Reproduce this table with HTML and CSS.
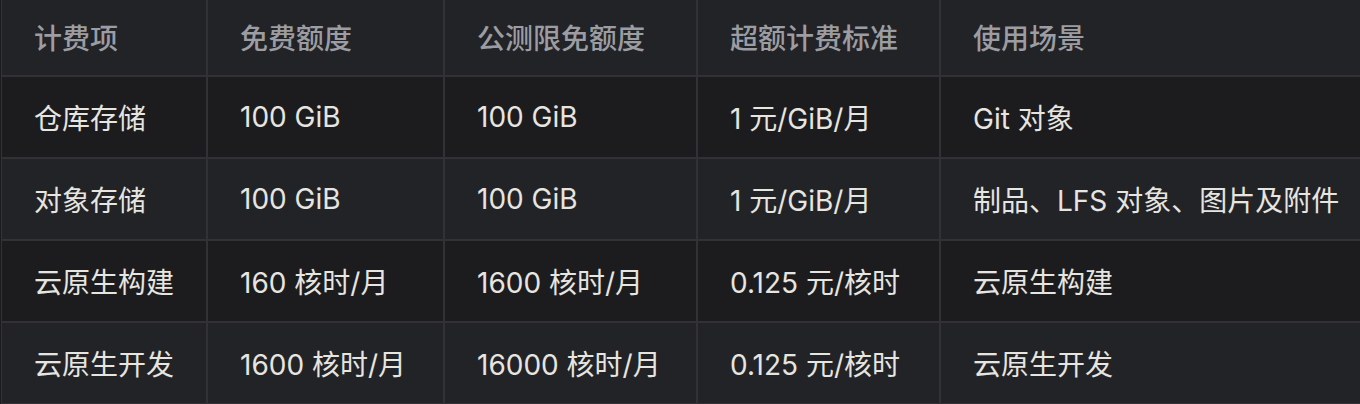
FILE: index.html
```html
<!DOCTYPE html>
<html lang="zh-CN">
<head>
<meta charset="utf-8">
<title>计费</title>
<link rel="stylesheet" href="styles.css">
</head>
<body>
<div class="wrap">
<table class="billing">
  <colgroup>
    <col class="c1"><col class="c2"><col class="c3"><col class="c4"><col class="c5">
  </colgroup>
  <thead>
    <tr><th>计费项</th><th>免费额度</th><th>公测限免额度</th><th>超额计费标准</th><th>使用场景</th></tr>
  </thead>
  <tbody>
    <tr class="odd"><td>仓库存储</td><td>100 GiB</td><td>100 GiB</td><td>1 元/GiB/月</td><td>Git 对象</td></tr>
    <tr class="even"><td>对象存储</td><td>100 GiB</td><td>100 GiB</td><td>1 元/GiB/月</td><td>制品、LFS 对象、图片及附件</td></tr>
    <tr class="odd"><td>云原生构建</td><td>160 核时/月</td><td>1600 核时/月</td><td>0.125 元/核时</td><td>云原生构建</td></tr>
    <tr class="even"><td>云原生开发</td><td>1600 核时/月</td><td>16000 核时/月</td><td>0.125 元/核时</td><td>云原生开发</td></tr>
  </tbody>
</table>
</div>
</body>
</html>
```

FILE: styles.css
```css
html, body {
  margin: 0;
  padding: 0;
  background: #1c1c1f;
  overflow: hidden;
}
.wrap {
  padding-left: 1px;
  width: 1359px;
}
.billing {
  border-collapse: separate;
  border-spacing: 0;
  table-layout: fixed;
  width: 1359px;
  font-family: Inter, "Noto Sans CJK SC", sans-serif;
  font-size: 28px;
}
.c1 { width: 207px; }
.c2 { width: 237px; }
.c3 { width: 253px; }
.c4 { width: 243px; }
.c5 { width: 419px; }
.billing th,
.billing td {
  box-sizing: border-box;
  padding: 0 31px 0 32px;
  text-align: left;
  white-space: nowrap;
  border-right: 2px solid #313136;
  border-bottom: 2px solid #313136;
}
.billing th:first-child,
.billing td:first-child {
  border-left: 1px solid #313136;
}
.billing th:last-child,
.billing td:last-child {
  border-right: 0;
  padding-right: 0;
}
.billing th {
  height: 77px;
  padding-bottom: 2px;
  font-weight: 500;
  color: #9c9da2;
  background: #222327;
}
.billing td {
  height: 82px;
  font-weight: 400;
  color: #e7e5e0;
}
.billing tr.odd td { background: #1c1c1f; }
.billing tr.even td { background: #222327; }
```
